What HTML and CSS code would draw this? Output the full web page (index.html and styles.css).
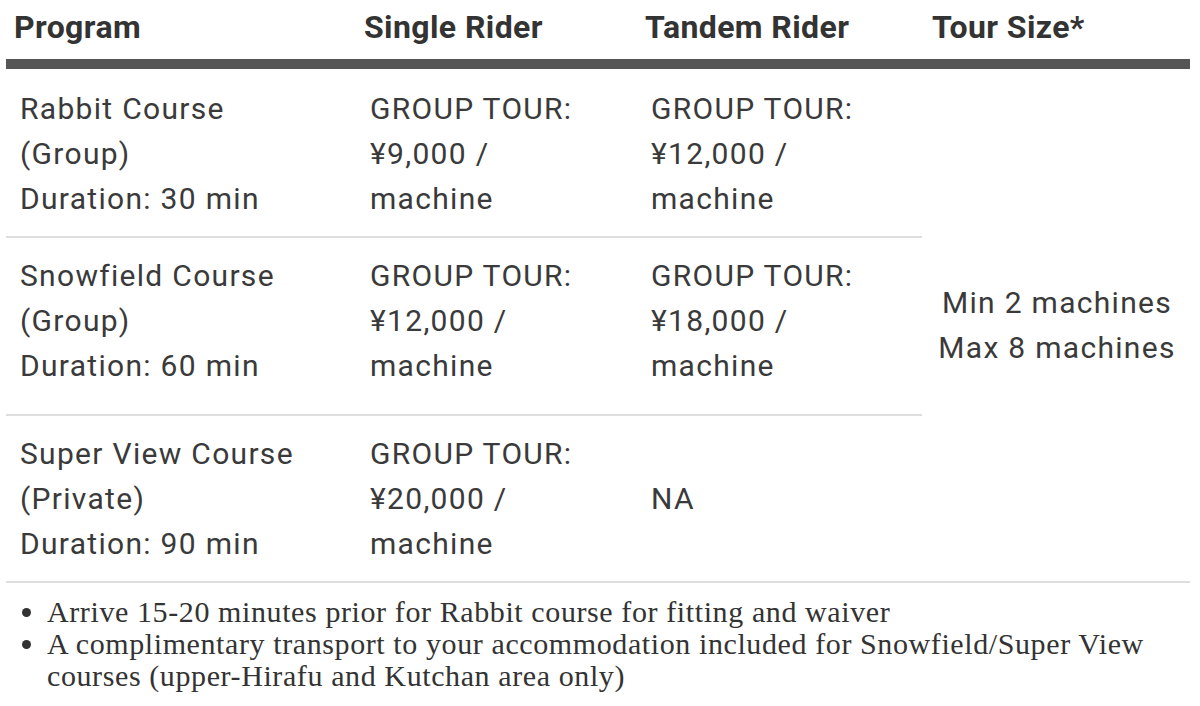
FILE: index.html
```html
<!DOCTYPE html>
<html lang="en">
<head>
<meta charset="utf-8">
<title>Snowmobile Tour Programs</title>
<link rel="stylesheet" href="styles.css">
</head>
<body>
<div class="wrap">
  <table class="prices">
    <colgroup>
      <col class="c-program">
      <col class="c-single">
      <col class="c-tandem">
      <col class="c-size">
    </colgroup>
    <thead>
      <tr>
        <th>Program</th>
        <th>Single Rider</th>
        <th>Tandem Rider</th>
        <th class="th-size">Tour Size*</th>
      </tr>
    </thead>
    <tbody>
      <tr class="row-first">
        <td>Rabbit Course<br>(Group)<br>Duration: 30 min</td>
        <td>GROUP TOUR:<br>¥9,000 /<br>machine</td>
        <td class="tandem">GROUP TOUR:<br>¥12,000 /<br>machine</td>
        <td class="size" rowspan="3">Min 2 machines<br>Max 8 machines</td>
      </tr>
      <tr class="row-tall">
        <td>Snowfield Course<br>(Group)<br>Duration: 60 min</td>
        <td>GROUP TOUR:<br>¥12,000 /<br>machine</td>
        <td class="tandem">GROUP TOUR:<br>¥18,000 /<br>machine</td>
      </tr>
      <tr>
        <td>Super View Course<br>(Private)<br>Duration: 90 min</td>
        <td>GROUP TOUR:<br>¥20,000 /<br>machine</td>
        <td class="tandem na">NA</td>
      </tr>
    </tbody>
  </table>
  <ul class="notes">
    <li>Arrive 15-20 minutes prior for Rabbit course for fitting and waiver</li>
    <li>A complimentary transport to your accommodation included for Snowfield/Super View courses (upper-Hirafu and Kutchan area only)</li>
  </ul>
</div>
</body>
</html>
```

FILE: styles.css
```css
html, body {
  margin: 0;
  padding: 0;
  background: #ffffff;
}

.wrap {
  margin: 0 10px 0 6px;
}

.prices {
  width: 100%;
  border-collapse: collapse;
  table-layout: fixed;
  font-family: Roboto, "Liberation Sans", sans-serif;
  color: #3a3a3a;
}

.c-program { width: 350px; }
.c-single { width: 281px; }
.c-tandem { width: 285px; }
.c-size { width: auto; }

.prices th {
  font-size: 32px;
  font-weight: 700;
  line-height: 48px;
  letter-spacing: 0.4px;
  color: #333333;
  text-align: left;
  padding: 3px 6px 8px 8px;
  border-bottom: 10px solid #555555;
  white-space: nowrap;
}

.prices th.th-size {
  padding-left: 10px;
}

.prices td {
  font-size: 30px;
  line-height: 45px;
  letter-spacing: 1.3px;
  padding: 15px 12px 15px 14px;
  vertical-align: top;
  border-bottom: 2px solid #dedede;
  text-align: left;
}

.prices td.tandem {
  padding-left: 14px;
}

.prices td.na {
  vertical-align: middle;
}

.prices .row-first td {
  padding-top: 17px;
}

.prices .row-tall td {
  padding-bottom: 26px;
}

.prices td.size {
  text-align: center;
  vertical-align: middle;
  padding: 0 4px 0 6px;
}

.notes {
  margin: 13px 0 0 0;
  padding-left: 41px;
  font-family: "Liberation Serif", "Times New Roman", serif;
  font-size: 30px;
  line-height: 32px;
  letter-spacing: 0.6px;
  color: #333333;
}
```
